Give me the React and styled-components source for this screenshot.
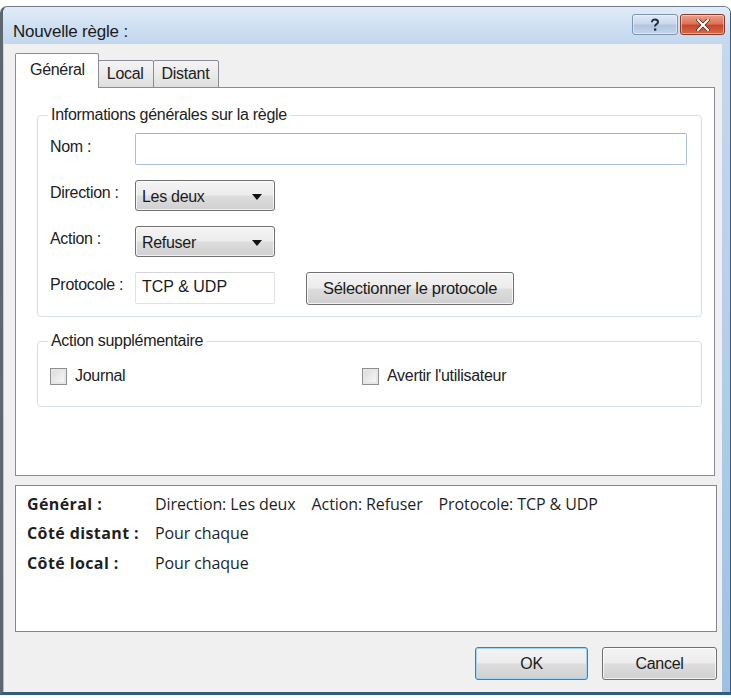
import React from "react";
import styled, { createGlobalStyle } from "styled-components";

const GlobalStyle = createGlobalStyle`
  html, body {
    margin: 0;
    padding: 0;
    background: #ffffff;
  }
  body {
    width: 731px;
    height: 698px;
    overflow: hidden;
    font-family: "Liberation Sans", Arial, sans-serif;
  }
`;

const Window = styled.div`
  box-sizing: border-box;
  width: 731px;
  height: 689px;
  margin-top: 6px;
  display: flex;
  flex-direction: column;
  border-top: 1px solid #6f7c8c;
  border-left: 3px solid #5e6670;
  border-right: 1px solid #3d5a78;
  border-bottom: 3px solid #2f5e7e;
  border-radius: 7px 7px 0 0;
  background: linear-gradient(180deg, #dce8f6 0%, #c4d8ee 6%, #b9d0ea 40%, #9fc0e2 100%);
`;

const TitleBar = styled.div`
  height: 37px;
  flex: none;
  display: flex;
  align-items: flex-start;
  justify-content: space-between;
  padding: 0 5px 0 10px;
  background: linear-gradient(180deg, #e2ecf8 0%, #cddff2 55%, #c2d7ee 100%);
  border-radius: 6px 6px 0 0;
`;

const Title = styled.div`
  font-size: 17px;
  color: #1b1b1b;
  margin-top: 15px;
  letter-spacing: -0.2px;
`;

const Controls = styled.div`
  display: flex;
  gap: 2px;
  margin-top: 7px;
`;

const CaptionButton = styled.div`
  box-sizing: border-box;
  width: ${(p) => (p.$close ? "45px" : "46px")};
  height: 21px;
  border: 1px solid ${(p) => (p.$close ? "#8a3a2a" : "#7d95b3")};
  border-radius: 3px;
  display: flex;
  align-items: center;
  justify-content: center;
  background: ${(p) =>
    p.$close
      ? "linear-gradient(180deg, #eba18b 0%, #dd7457 45%, #c8472b 55%, #d76a4c 100%)"
      : "linear-gradient(180deg, #e2ebf6 0%, #c9d8ea 45%, #b2c6df 55%, #c4d5e9 100%)"};
  box-shadow: inset 0 0 0 1px rgba(255, 255, 255, 0.45);
`;

const Client = styled.div`
  flex: 1;
  margin: 0 8px 0 1px;
  background: #f0f0f0;
  padding: 9px 5px 0 11px;
  display: flex;
  flex-direction: column;
`;

const TabStrip = styled.div`
  display: flex;
  align-items: flex-end;
  height: 35px;
  position: relative;
  z-index: 1;
  margin-bottom: -1px;
`;

const Tab = styled.div`
  box-sizing: border-box;
  height: ${(p) => (p.$active ? "35px" : "28px")};
  padding: ${(p) => (p.$active ? "7px 13px 0 14px" : "4px 9px 0 8px")};
  margin-left: ${(p) => (p.$first ? "0" : "-1px")};
  font-size: 16px;
  color: #222;
  letter-spacing: -0.3px;
  border: 1px solid #898c95;
  border-bottom: ${(p) => (p.$active ? "none" : "1px solid #898c95")};
  border-radius: 2px 2px 0 0;
  background: ${(p) =>
    p.$active ? "#ffffff" : "linear-gradient(180deg, #f4f4f4 0%, #ebebeb 50%, #dedede 100%)"};
`;

const Panel = styled.div`
  box-sizing: border-box;
  height: 389px;
  margin-right: 2px;
  border: 1px solid #898c95;
  background: #ffffff;
  padding: 18px 12px 0 21px;
`;

const Group = styled.fieldset`
  margin: ${(p) => (p.$spaced ? "15px 0 0" : "0")};
  border: 1px solid #d5dfe5;
  border-radius: 4px;
  padding: ${(p) => p.$pad};
`;

const Legend = styled.legend`
  font-size: 16px;
  line-height: 18px;
  color: #222;
  padding: 0 3px;
  margin-left: -2px;
  letter-spacing: -0.3px;
`;

const Form = styled.div`
  display: grid;
  grid-template-columns: 85px 1fr;
  grid-template-rows: 32px 31px 31px 32px;
  row-gap: 15px;
  margin-top: 9px;
`;

const Label = styled.div`
  font-size: 16px;
  color: #222;
  letter-spacing: -0.3px;
  padding-top: ${(p) => p.$top || "4px"};
  white-space: nowrap;
`;

const TextInput = styled.div`
  box-sizing: border-box;
  height: 100%;
  margin-right: 1px;
  border: 1px solid ${(p) => (p.$soft ? "#e0e2e8" : "#abc0da")};
  border-top-color: ${(p) => (p.$soft ? "#d3d5dc" : "#9db3cf")};
  border-radius: 2px;
  background: #ffffff;
  font-size: 16px;
  color: #1b1b1b;
  padding: 5px 6px 0;
  width: ${(p) => p.$width || "auto"};
`;

const Combo = styled.div`
  box-sizing: border-box;
  width: 140px;
  height: 100%;
  display: flex;
  align-items: center;
  justify-content: space-between;
  padding: 2px 12px 0 6px;
  border: 1px solid #707070;
  border-radius: 3px;
  background: linear-gradient(180deg, #f4f4f4 0%, #ececec 48%, #dddddd 52%, #d0d0d0 100%);
  box-shadow: inset 0 0 0 1px rgba(255, 255, 255, 0.7);
  font-size: 16px;
  color: #1b1b1b;
  letter-spacing: -0.3px;
`;

const Arrow = styled.span`
  width: 0;
  height: 0;
  border-left: 5px solid transparent;
  border-right: 5px solid transparent;
  border-top: 6px solid #111;
  margin-top: 1px;
`;

const ProtoRow = styled.div`
  display: flex;
  align-items: center;
  gap: 30px;
`;

const Button = styled.div`
  box-sizing: border-box;
  height: ${(p) => p.$h || "33px"};
  width: ${(p) => p.$w || "auto"};
  padding: 0 10px;
  display: flex;
  align-items: center;
  justify-content: center;
  border: 1px solid ${(p) => (p.$default ? "#3c7fb1" : "#707070")};
  border-radius: 3px;
  background: linear-gradient(180deg, #f4f4f4 0%, #ececec 48%, #dddddd 52%, #d0d0d0 100%);
  box-shadow: inset 0 0 0 1px ${(p) => (p.$default ? "#9fd5f3" : "rgba(255,255,255,0.75)")};
  font-size: ${(p) => p.$fs || "16px"};
  color: #1b1b1b;
  letter-spacing: -0.3px;
  white-space: nowrap;
`;

const Checks = styled.div`
  display: grid;
  grid-template-columns: 312px 1fr;
  padding-top: 1px;
`;

const Check = styled.div`
  display: flex;
  align-items: center;
  gap: 8px;
  font-size: 16px;
  color: #222;
  letter-spacing: -0.3px;
  height: 20px;
`;

const Box = styled.span`
  box-sizing: border-box;
  width: 17px;
  height: 17px;
  border: 1px solid #8f8f8f;
  background: linear-gradient(135deg, #d6d6d6 0%, #eeeeee 60%, #fafafa 100%);
  box-shadow: inset 0 0 0 2px #e6e6e6;
`;

const Summary = styled.div`
  box-sizing: border-box;
  height: 147px;
  margin-top: 9px;
  border: 1px solid #828790;
  background: #ffffff;
  padding: 3px 0 0 11px;
  font-family: "Open Sans", "Noto Sans", sans-serif;
  font-size: 16px;
  color: #1f1f1f;
`;

const SummaryRow = styled.div`
  display: grid;
  grid-template-columns: 128px 1fr;
  height: 29.5px;
  align-items: center;
  white-space: nowrap;
`;

const SumLabel = styled.span`
  font-weight: 700;
  letter-spacing: 0.4px;
`;

const SumValue = styled.span`
  display: flex;
  gap: 16px;
  letter-spacing: -0.1px;
`;

const Footer = styled.div`
  display: flex;
  justify-content: flex-end;
  gap: 14px;
  margin-top: 15px;
`;

const HelpIcon = () => (
  <svg width="12" height="14" viewBox="0 0 12 14">
    <path
      d="M3 4.2 C3 2.2 4.4 1.4 6 1.4 C7.8 1.4 9 2.4 9 3.9 C9 5.4 7.8 5.9 6.9 6.6 C6.3 7.1 6.1 7.6 6.1 8.6"
      fill="none"
      stroke="#1f2f45"
      strokeWidth="2"
    />
    <rect x="5" y="10.4" width="2.3" height="2.3" fill="#1f2f45" />
  </svg>
);

const CloseIcon = () => (
  <svg width="14" height="12" viewBox="0 0 14 12">
    <path
      d="M2 1 L12 11 M12 1 L2 11"
      stroke="#4a1a10"
      strokeWidth="3.6"
      strokeLinecap="square"
    />
    <path
      d="M2 1 L12 11 M12 1 L2 11"
      stroke="#ffffff"
      strokeWidth="2.2"
      strokeLinecap="square"
    />
  </svg>
);

export default function App() {
  return (
    <>
      <GlobalStyle />
      <Window>
        <TitleBar>
          <Title>Nouvelle règle :</Title>
          <Controls>
            <CaptionButton>
              <HelpIcon />
            </CaptionButton>
            <CaptionButton $close>
              <CloseIcon />
            </CaptionButton>
          </Controls>
        </TitleBar>

        <Client>
          <TabStrip>
            <Tab $active $first>Général</Tab>
            <Tab>Local</Tab>
            <Tab>Distant</Tab>
          </TabStrip>

          <Panel>
            <Group $pad="0 13px 12px 12px">
              <Legend>Informations générales sur la règle</Legend>
              <Form>
                <Label $top="5px">Nom :</Label>
                <TextInput />
                <Label>Direction :</Label>
                <Combo>
                  Les deux <Arrow />
                </Combo>
                <Label>Action :</Label>
                <Combo>
                  Refuser <Arrow />
                </Combo>
                <Label>Protocole :</Label>
                <ProtoRow>
                  <TextInput $soft $width="140px">TCP &amp; UDP</TextInput>
                  <Button $w="208px" $fs="16.5px">Sélectionner le protocole</Button>
                </ProtoRow>
              </Form>
            </Group>

            <Group $spaced $pad="15px 12px 20px 12px">
              <Legend>Action supplémentaire</Legend>
              <Checks>
                <Check>
                  <Box />
                  Journal
                </Check>
                <Check>
                  <Box />
                  Avertir l'utilisateur
                </Check>
              </Checks>
            </Group>
          </Panel>

          <Summary>
            <SummaryRow>
              <SumLabel>Général :</SumLabel>
              <SumValue>
                <span>Direction: Les deux</span>
                <span>Action: Refuser</span>
                <span>Protocole: TCP &amp; UDP</span>
              </SumValue>
            </SummaryRow>
            <SummaryRow>
              <SumLabel>Côté distant :</SumLabel>
              <SumValue>Pour chaque</SumValue>
            </SummaryRow>
            <SummaryRow>
              <SumLabel>Côté local :</SumLabel>
              <SumValue>Pour chaque</SumValue>
            </SummaryRow>
          </Summary>

          <Footer>
            <Button $default $w="113px">OK</Button>
            <Button $w="115px">Cancel</Button>
          </Footer>
        </Client>
      </Window>
    </>
  );
}
